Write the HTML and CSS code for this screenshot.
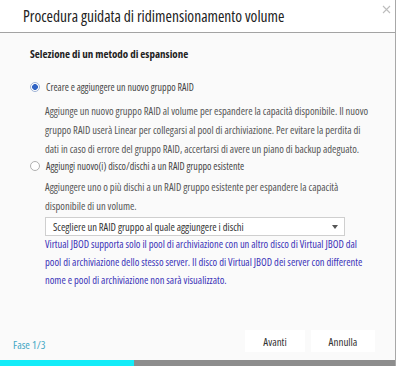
FILE: index.html
```html
<!DOCTYPE html>
<html lang="it">
<head>
  <meta charset="UTF-8" />
  <meta name="viewport" content="width=device-width, initial-scale=1.0"/>
  <title>Procedura guidata di ridimensionamento volume</title>
  <link rel="stylesheet" href="styles.css">
</head>
<body>

  <div class="dialog">
    <div class="head">
      <h1>Procedura guidata di ridimensionamento volume</h1>
      <svg class="close" width="9" height="9" viewBox="0 0 9 9">
        <path d="M1 1L8 8M8 1L1 8" stroke="#bdbdbd" stroke-width="1.1" fill="none"/>
      </svg>
    </div>

    <div class="content">
      <h2>Selezione di un metodo di espansione</h2>

      <label class="option first">
        <span class="radio checked"></span>
        Creare e aggiungere un nuovo gruppo RAID
      </label>
      <p class="desc">
        Aggiunge un nuovo gruppo RAID al volume per espandere la capacità disponibile. Il nuovo<br>
        gruppo RAID userà Linear per collegarsi al pool di archiviazione. Per evitare la perdita di<br>
        dati in caso di errore del gruppo RAID, accertarsi di avere un piano di backup adeguato.
      </p>

      <label class="option second">
        <span class="radio"></span>
        Aggiungi nuovo(i) disco/dischi a un RAID gruppo esistente
      </label>
      <p class="desc desc2">
        Aggiungere uno o più dischi a un RAID gruppo esistente per espandere la capacità<br>
        disponibile di un volume.
      </p>

      <div class="select">
        <span>Scegliere un RAID gruppo al quale aggiungere i dischi</span>
        <span class="arrow"></span>
      </div>

      <p class="note">
        Virtual JBOD supporta solo il pool di archiviazione con un altro disco di Virtual JBOD dal<br>
        pool di archiviazione dello stesso server. Il disco di Virtual JBOD dei server con differente<br>
        nome e pool di archiviazione non sarà visualizzato.
      </p>
    </div>

    <div class="foot">
      <span class="step">Fase 1/3</span>
      <div class="buttons">
        <button>Avanti</button>
        <button>Annulla</button>
      </div>
    </div>

    <div class="progress">
      <div class="fill" style="width: 34%"></div>
    </div>
  </div>

</body>
</html>
```

FILE: styles.css
```css
body {
  margin: 0;
  background: #fff;
  font-family: "Open Sans", sans-serif;
  font-stretch: 78%;
  color: #555;
}
.dialog {
  width: 395px;
  height: 366px;
  border-right: 1px solid #a8a8a8;
  background: #fafafa;
  display: flex;
  flex-direction: column;
}
.head {
  height: 32px;
  background: #fff;
  border-bottom: 1px solid #a3a3a3;
  display: flex;
  align-items: flex-start;
  justify-content: space-between;
  padding-left: 23px;
}
h1 {
  margin: 0;
  font-size: 15.5px;
  font-weight: normal;
  line-height: 33px;
  color: #222;
}
.close {
  margin: 5px 4px 0 0;
}
.content {
  padding-left: 30px;
}
h2 {
  margin: 13px 0 0;
  font-size: 11px;
  line-height: 16px;
  color: #222;
}
.option {
  display: flex;
  align-items: center;
  gap: 6px;
  font-size: 10px;
  line-height: 12px;
  color: #444;
}
.option.first {
  margin-top: 19px;
}
.option.second {
  margin-top: 1px;
}
.radio {
  width: 8px;
  height: 8px;
  border: 1px solid #b0b0b0;
  border-radius: 50%;
  background: #fff;
  box-sizing: content-box;
}
.radio.checked {
  border-color: #9fb3d6;
  background: radial-gradient(circle, #2f63c4 0 2.6px, #fff 3.2px);
}
.desc, .note {
  margin: 9px 0 0 15px;
  font-size: 10.5px;
  line-height: 19px;
  white-space: nowrap;
}
.desc2 {
  margin-top: 6px;
}
.select {
  margin: 1px 0 0 15px;
  width: 285px;
  height: 17px;
  border: 1px solid #cfcfcf;
  background: #fff;
  display: flex;
  align-items: center;
  justify-content: space-between;
  padding: 0 6px 0 7px;
  box-sizing: content-box;
  font-size: 10.5px;
  color: #333;
}
.arrow {
  border-left: 3px solid transparent;
  border-right: 3px solid transparent;
  border-top: 4px solid #555;
}
.note {
  margin-top: -1px;
  line-height: 18px;
  color: #3a33b8;
}
.foot {
  flex: 1;
  display: flex;
  align-items: flex-end;
  justify-content: space-between;
  padding: 0 20px 8px 13px;
}
.step {
  font-size: 11px;
  color: #41a6c4;
}
.buttons {
  display: flex;
  gap: 6px;
}
button {
  width: 60px;
  height: 22px;
  border: none;
  background: #fff;
  font-family: inherit;
  font-stretch: inherit;
  font-size: 11px;
  color: #333;
  padding: 0;
}
button + button {
  width: 64px;
}
.progress {
  height: 6px;
  background: #8d8d8d;
}
.fill {
  height: 100%;
  background: #14ecf8;
}
```
